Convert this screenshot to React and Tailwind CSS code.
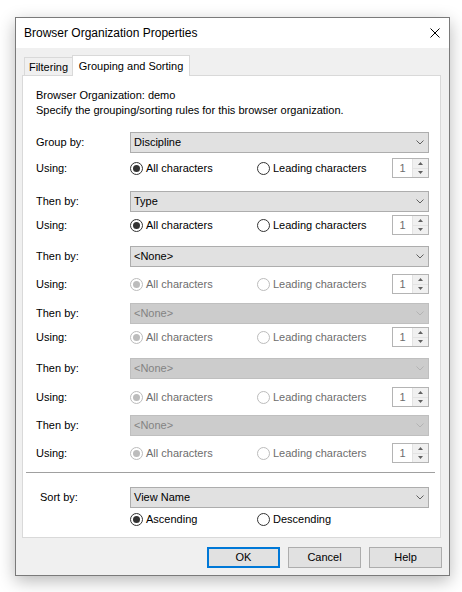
import React from "react";

// ---------- small controls ----------
const Radio = ({ checked, disabled, label }) => (
  <div className="flex items-center gap-[3px]">
    <span
      className={`w-[13px] h-[13px] rounded-full border bg-white flex items-center justify-center ${
        disabled ? "border-[#bcbcbc]" : "border-[#333333]"
      }`}
    >
      {checked && (
        <span className={`w-[7px] h-[7px] rounded-full ${disabled ? "bg-[#bcbcbc]" : "bg-[#333333]"}`} />
      )}
    </span>
    <span className={disabled ? "text-[#6d6d6d]" : "text-black"}>{label}</span>
  </div>
);

const Combo = ({ value, disabled }) => (
  <div
    className={`w-[299px] h-[21px] border flex items-center justify-between pl-[3px] pr-[4px] ${
      disabled ? "bg-[#cccccc] border-[#bfbfbf] text-[#838383]" : "bg-[#e1e1e1] border-[#adadad] text-black"
    }`}
  >
    <span>{value}</span>
    <svg width="8" height="5" viewBox="0 0 8 5">
      <path d="M0.5 0.5 L4 4 L7.5 0.5" fill="none" stroke={disabled ? "#b3b3b3" : "#606060"} strokeWidth="1" />
    </svg>
  </div>
);

const Spin = () => (
  <div className="w-[37px] h-[20px] border border-[#b4b4b4] bg-white flex">
    <div className="flex-1 flex items-center justify-center text-[#6d6d6d]">1</div>
    <div className="w-[16px] flex flex-col border-l border-[#e3e3e3]">
      <div className="flex-1 bg-[#f0f0f0] flex items-center justify-center border-b border-[#e3e3e3]">
        <svg width="5" height="3" viewBox="0 0 5 3">
          <path d="M0 3 L2.5 0 L5 3 Z" fill="#606060" />
        </svg>
      </div>
      <div className="flex-1 bg-[#f0f0f0] flex items-center justify-center">
        <svg width="5" height="3" viewBox="0 0 5 3">
          <path d="M0 0 L2.5 3 L5 0 Z" fill="#606060" />
        </svg>
      </div>
    </div>
  </div>
);

const Button = ({ label, primary }) => (
  <div
    className={`w-[73px] h-[21px] flex items-center justify-center bg-[#e1e1e1] ${
      primary ? "border-2 border-[#0078d7]" : "border border-[#adadad]"
    }`}
  >
    {label}
  </div>
);

// ---------- rule rows ----------
const rules = [
  { label: "Group by:", value: "Discipline", comboMt: "mt-[14px]", usingMt: "mt-[5px]", combo: false, using: false },
  { label: "Then by:", value: "Type", comboMt: "mt-[13px]", usingMt: "mt-[3px]", combo: false, using: false },
  { label: "Then by:", value: "<None>", comboMt: "mt-[11px]", usingMt: "mt-[7px]", combo: false, using: true },
  { label: "Then by:", value: "<None>", comboMt: "mt-[9px]", usingMt: "mt-[3px]", combo: true, using: true },
  { label: "Then by:", value: "<None>", comboMt: "mt-[11px]", usingMt: "mt-[8px]", combo: true, using: true },
  { label: "Then by:", value: "<None>", comboMt: "mt-[8px]", usingMt: "mt-[7px]", combo: true, using: true },
];

const App = () => {
  return (
    <div className="w-[462px] h-[592px] bg-white pt-[17px] pl-[15px] font-['Liberation_Sans',Arial,sans-serif] text-[11px] text-black">
      <div className="w-[435px] h-[559px] border border-[#7a7a7a] bg-[#f0f0f0] shadow-[0_5px_16px_rgba(0,0,0,0.28)] flex flex-col">
        {/* title bar */}
        <div className="h-[30px] bg-white flex items-center justify-between pl-[8px] pr-[9px]">
          <span className="text-[12px]">Browser Organization Properties</span>
          <svg width="10" height="10" viewBox="0 0 10 10">
            <path d="M0.5 0.5 L9.5 9.5 M9.5 0.5 L0.5 9.5" stroke="#000" strokeWidth="1" />
          </svg>
        </div>

        <div className="flex-1 flex flex-col pt-[7px] pl-[6px] pr-[8px]">
          {/* tabs */}
          <div className="flex items-end pl-[2px]">
            <div className="w-[48px] h-[18px] border-l border-t border-[#d9d9d9] bg-[#f0f0f0] flex items-center justify-center pt-[2px]">
              Filtering
            </div>
            <div className="relative z-10 -mb-px w-[118px] h-[21px] border-l border-t border-r border-[#d9d9d9] bg-white flex items-center justify-center">
              Grouping and Sorting
            </div>
          </div>

          {/* panel */}
          <div className="w-[419px] border border-[#d9d9d9] bg-white flex flex-col pt-[12px] pl-[13px] pb-[8px] leading-[15px]">
            <div>Browser Organization: demo</div>
            <div>Specify the grouping/sorting rules for this browser organization.</div>

            {rules.map((r, i) => (
              <React.Fragment key={i}>
                <div className={`flex items-center h-[21px] ${r.comboMt}`}>
                  <span className="w-[94px]">{r.label}</span>
                  <Combo value={r.value} disabled={r.combo} />
                </div>
                <div className={`flex items-center h-[20px] ${r.usingMt}`}>
                  <span className="w-[94px]">Using:</span>
                  <div className="w-[127px]">
                    <Radio checked label="All characters" disabled={r.using} />
                  </div>
                  <div className="w-[135px]">
                    <Radio label="Leading characters" disabled={r.using} />
                  </div>
                  <Spin />
                </div>
              </React.Fragment>
            ))}

            <div className="mt-[9px] -ml-[10px] w-[409px] h-px bg-[#a0a0a0]" />

            <div className="flex items-center h-[21px] mt-[14px]">
              <span className="w-[94px] pl-[4px]">Sort by:</span>
              <Combo value="View Name" />
            </div>
            <div className="flex items-center h-[20px] mt-[1px] pl-[94px]">
              <div className="w-[127px]">
                <Radio checked label="Ascending" />
              </div>
              <Radio label="Descending" />
            </div>
          </div>

          {/* buttons */}
          <div className="flex justify-end gap-[8px] mt-[9px] -mr-[1px]">
            <Button label="OK" primary />
            <Button label="Cancel" />
            <Button label="Help" />
          </div>
        </div>
      </div>
    </div>
  );
};

export default App;
